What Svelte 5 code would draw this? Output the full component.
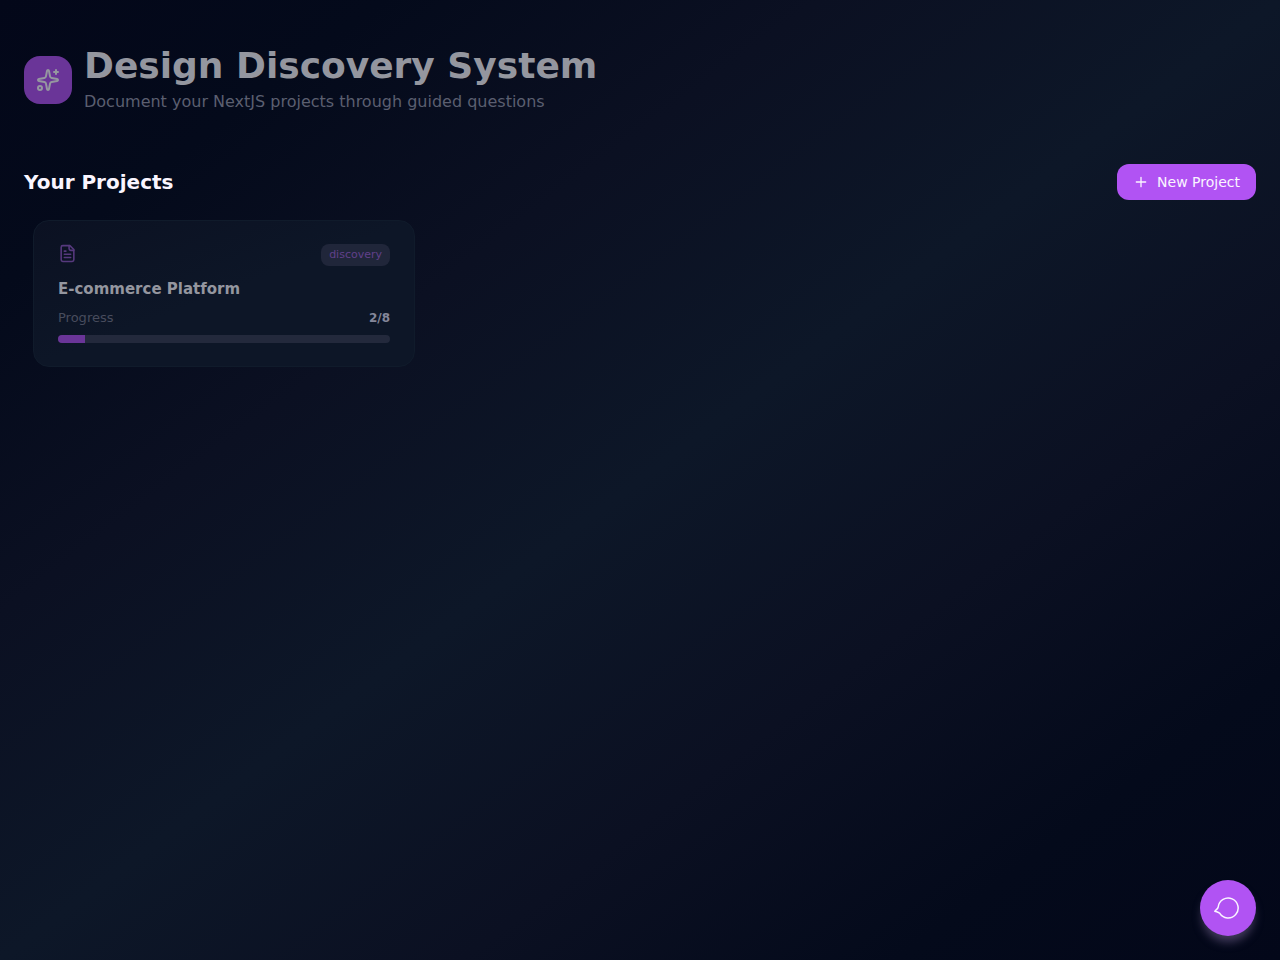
<script>
  const projects = [{ name: 'E-commerce Platform', stage: 'discovery', done: 2, total: 8, shown: 8 }];
</script>

<div class="page">
  <header>
    <div class="logo">
      <svg width="24" height="24" viewBox="0 0 24 24" aria-hidden="true">
        <path d="M11.017 2.814a1 1 0 0 1 1.966 0l1.051 5.558a2 2 0 0 0 1.594 1.594l5.558 1.051a1 1 0 0 1 0 1.966l-5.558 1.051a2 2 0 0 0-1.594 1.594l-1.051 5.558a1 1 0 0 1-1.966 0l-1.051-5.558a2 2 0 0 0-1.594-1.594l-5.558-1.051a1 1 0 0 1 0-1.966l5.558-1.051a2 2 0 0 0 1.594-1.594z" />
        <path d="M20 2v4M22 4h-4" />
        <circle cx="4" cy="20" r="2" />
      </svg>
    </div>
    <div>
      <h1>Design Discovery System</h1>
      <p>Document your NextJS projects through guided questions</p>
    </div>
  </header>

  <main>
    <div class="bar">
      <h2>Your Projects</h2>
      <button class="new" type="button">
        <svg width="16" height="16" viewBox="0 0 24 24" aria-hidden="true"><path d="M5 12h14M12 5v14" /></svg>
        New Project
      </button>
    </div>

    <div class="grid">
      {#each projects as project}
        <article>
          <div class="row top">
            <svg width="19" height="19" viewBox="0 0 24 24" aria-hidden="true">
              <path d="M15 2H6a2 2 0 0 0-2 2v16a2 2 0 0 0 2 2h12a2 2 0 0 0 2-2V7Z" />
              <path d="M14 2v4a2 2 0 0 0 2 2h4M10 9H8M16 13H8M16 17H8" />
            </svg>
            <span class="badge">{project.stage}</span>
          </div>
          <h3>{project.name}</h3>
          <div class="row stats">
            <span>Progress</span>
            <strong>{project.done}/{project.total}</strong>
          </div>
          <div class="track"><div class="fill" style="width: {project.shown}%"></div></div>
        </article>
      {/each}
    </div>
  </main>

  <button class="chat" type="button" aria-label="Open chat">
    <svg width="28" height="28" viewBox="-2 -2 28 28" aria-hidden="true">
      <path d="M2.2 11L1.6 12.4L-1.2 15.2L1.4 16L3.6 17.2A10 10 0 1 0 2.2 11z" />
    </svg>
  </button>
</div>

<style>
  :global(body) {
    margin: 0;
    background: #040819;
  }
  .page {
    box-sizing: border-box;
    min-height: 100vh;
    padding: 46px 24px 24px;
    background: linear-gradient(to bottom right, #030719, #040a1b 15%, #0b1022 32%, #0d1728 50%, #0b1022 68%, #040a1b 85%, #030719);
    color: #faf5ff;
    font-family: "DejaVu Sans", sans-serif;
  }
  h1, h2, h3, p {
    margin: 0;
  }
  svg {
    display: block;
    fill: none;
    stroke: currentColor;
    stroke-width: 2;
    stroke-linecap: round;
    stroke-linejoin: round;
  }
  header {
    display: flex;
    align-items: center;
    gap: 12px;
    margin-bottom: 50px;
  }
  .logo {
    display: grid;
    place-items: center;
    width: 48px;
    height: 48px;
    border-radius: 16px;
    background: #6a3598;
    color: #9597a0;
  }
  h1 {
    font-size: 36px;
    line-height: 40px;
    color: #94969f;
  }
  header p {
    margin-top: 4px;
    font-size: 16px;
    line-height: 24px;
    color: #5b5f70;
  }
  .bar {
    display: flex;
    align-items: center;
    justify-content: space-between;
    margin-bottom: 20px;
  }
  h2 {
    font-size: 20px;
    line-height: 28px;
  }
  button {
    border: 0;
    font-family: inherit;
    color: #faf5ff;
    background: #b153f3;
    cursor: pointer;
  }
  .new {
    display: flex;
    align-items: center;
    gap: 8px;
    height: 36px;
    padding: 0 16px;
    border-radius: 12px;
    font-size: 14px;
  }
  .grid {
    display: grid;
    grid-template-columns: repeat(3, 1fr);
    gap: 34px;
    padding: 0 9px;
  }
  article {
    padding: 23px 24px;
    border: 1px solid #101b2b;
    border-radius: 16px;
    background: linear-gradient(to bottom right, #0b1122, #0d1627 50%);
  }
  .row {
    display: flex;
    justify-content: space-between;
  }
  .top {
    color: #56397d;
  }
  .badge {
    padding: 0 8px;
    border-radius: 8px;
    background: #20263a;
    font-size: 11px;
    line-height: 22px;
    color: #60408a;
  }
  h3 {
    margin-top: 12px;
    font-size: 15px;
    line-height: 22px;
    color: #94969f;
  }
  .stats {
    margin-top: 8px;
    font-size: 13px;
    line-height: 20px;
    color: #484c5d;
  }
  .stats strong {
    font-size: 12px;
    color: #84869a;
  }
  .track {
    height: 8px;
    margin-top: 7px;
    border-radius: 4px;
    background: #23293c;
    overflow: hidden;
  }
  .fill {
    height: 100%;
    background: #6a3598;
  }
  .chat {
    position: fixed;
    right: 24px;
    bottom: 24px;
    display: grid;
    place-items: center;
    width: 56px;
    height: 56px;
    padding: 0;
    border-radius: 50%;
    box-shadow: 0 8px 10px -2px #52486ecc;
  }
  .chat svg {
    stroke-width: 1.5;
  }
</style>
